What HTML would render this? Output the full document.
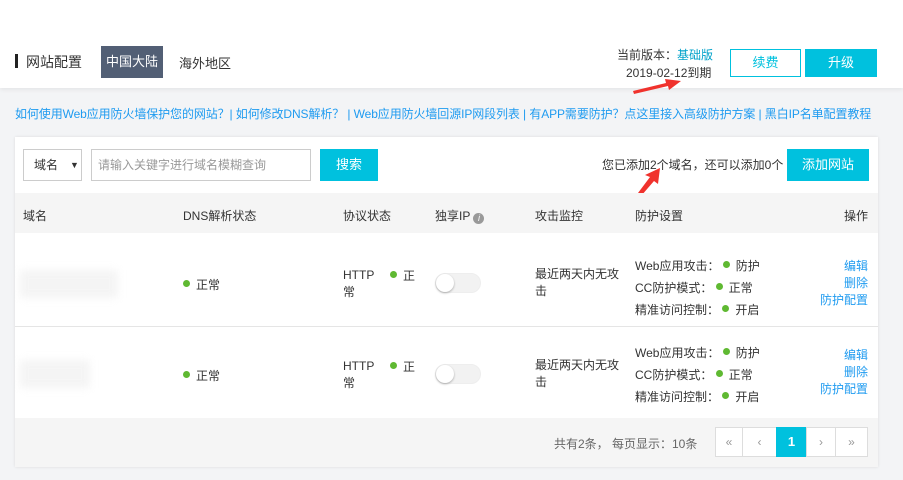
<!DOCTYPE html>
<html><head><meta charset="utf-8"><style>
*{margin:0;padding:0;box-sizing:border-box}
body{width:903px;height:480px;overflow:hidden;background:#f3f4f6;font-family:"Liberation Sans","Noto Sans CJK SC",sans-serif;font-size:12px;color:#333;position:relative}
.a{position:absolute;white-space:nowrap}
.hdr{position:absolute;left:0;top:0;width:903px;height:88px;background:#fff;box-shadow:0 2px 4px rgba(0,0,0,.06)}
.btn{position:absolute;text-align:center;font-size:13px}
.card{position:absolute;left:15px;top:137px;width:863px;height:330px;background:#fff;box-shadow:0 0 3px rgba(0,0,0,.1)}
.dot{display:inline-block;width:7px;height:7px;border-radius:50%;background:#5fb932;margin-right:6px;vertical-align:2px}
.lk{color:#1f9bf0}
.sw{position:absolute;width:46px;height:20px;border-radius:10px;background:#f2f2f2;border:1px solid #eee}
.sw:after{content:"";position:absolute;left:0;top:0;width:18px;height:18px;border-radius:50%;background:#fff;box-shadow:0 1px 2px rgba(0,0,0,.3)}
.pg{position:absolute;top:427px;height:30px;border:1px solid #ddd;background:#fff;text-align:center;line-height:28px;color:#999;font-size:12px}
</style></head><body>
<div class="hdr"></div>
<div class="a" style="left:15px;top:54px;width:3px;height:14px;background:#222"></div>
<div class="a" style="left:26px;top:52px;font-size:14px;color:#333">网站配置</div>
<div class="a" style="left:101px;top:46px;width:62px;height:32px;background:#525f75;color:#fff;font-size:13px;line-height:32px;text-align:center">中国大陆</div>
<div class="a" style="left:179px;top:53px;font-size:13px;color:#333">海外地区</div>
<div class="a" style="left:617px;top:46px;font-size:12px;color:#333">当前版本：<span class="lk" style="color:#00a2ca">基础版</span></div>
<div class="a" style="left:626px;top:64px;font-size:12px;color:#333">2019-02-12到期</div>
<div class="btn" style="left:730px;top:49px;width:71px;height:28px;border:1px solid #00c1de;color:#00c1de;line-height:26px">续费</div>
<div class="btn" style="left:805px;top:49px;width:72px;height:28px;background:#00c1de;color:#fff;line-height:28px">升级</div>
<svg class="a" style="left:630px;top:75px" width="60" height="25"><polygon points="3,16 36,8 35,4 51,6 39,15 38,11 4,19" fill="#f0322d"/></svg>
<div class="a lk" style="left:15px;top:105px;font-size:12px;letter-spacing:-0.1px">如何使用Web应用防火墙保护您的网站？| 如何修改DNS解析？ | Web应用防火墙回源IP网段列表 | 有APP需要防护？点这里接入高级防护方案 | 黑白IP名单配置教程</div>
<div class="card"></div>
<div class="a" style="left:23px;top:149px;width:59px;height:32px;border:1px solid #ccc;background:#fff;font-size:12px;line-height:30px;padding-left:10px">域名 <span style="position:absolute;left:46px;font-size:9px">▼</span></div>
<div class="a" style="left:91px;top:149px;width:220px;height:32px;border:1px solid #ccc;background:#fff;color:#999;font-size:12px;line-height:30px;padding-left:6px">请输入关键字进行域名模糊查询</div>
<div class="btn" style="left:320px;top:149px;width:58px;height:32px;background:#00c1de;color:#fff;line-height:32px">搜索</div>
<div class="a" style="left:602px;top:156px;font-size:12px;color:#333">您已添加2个域名，还可以添加0个</div>
<div class="btn" style="left:787px;top:149px;width:82px;height:32px;background:#00c1de;color:#fff;line-height:32px">添加网站</div>
<svg class="a" style="left:630px;top:165px" width="40" height="40"><polygon points="2,36 20,12 15,10 30,3 28,19 24,16 5,38" fill="#f0322d"/></svg>
<div class="a" style="left:15px;top:193px;width:863px;height:40px;background:#f5f5f5"></div>
<div class="a" style="left:23px;top:207px">域名</div>
<div class="a" style="left:183px;top:207px">DNS解析状态</div>
<div class="a" style="left:343px;top:207px">协议状态</div>
<div class="a" style="left:435px;top:207px">独享IP <span style="display:inline-block;width:11px;height:11px;border-radius:50%;background:#999;color:#fff;font-size:9px;line-height:11px;text-align:center;font-style:italic;vertical-align:-1px">i</span></div>
<div class="a" style="left:535px;top:207px">攻击监控</div>
<div class="a" style="left:635px;top:207px">防护设置</div>
<div class="a" style="left:844px;top:207px">操作</div>
<div class="a" style="left:15px;top:326px;width:863px;height:1px;background:#e5e5e5"></div>
<div class="a" style="left:15px;top:418px;width:863px;height:49px;background:#f5f5f5"></div>

<div class="a" style="left:20px;top:270px;width:98px;height:28px;background:#f0f0f0;filter:blur(4px);opacity:.7"></div>
<div class="a" style="left:183px;top:276px"><span class="dot"></span>正常</div>
<div class="a" style="left:343px;top:267px;line-height:17px">HTTP<br>常</div>
<div class="a" style="left:390px;top:267px"><span class="dot"></span>正</div>
<div class="sw" style="left:435px;top:273px"></div>
<div class="a" style="left:535px;top:266px;line-height:17px">最近两天内无攻<br>击</div>
<div class="a" style="left:635px;top:255px;line-height:22px">Web应用攻击： <span class="dot"></span>防护<br>CC防护模式： <span class="dot"></span>正常<br>精准访问控制： <span class="dot"></span>开启</div>
<div class="a lk" style="right:35px;top:258px;line-height:17px;text-align:right">编辑<br>删除<br>防护配置</div>

<div class="a" style="left:20px;top:360px;width:70px;height:28px;background:#f0f0f0;filter:blur(4px);opacity:.7"></div>
<div class="a" style="left:183px;top:367px"><span class="dot"></span>正常</div>
<div class="a" style="left:343px;top:358px;line-height:17px">HTTP<br>常</div>
<div class="a" style="left:390px;top:358px"><span class="dot"></span>正</div>
<div class="sw" style="left:435px;top:364px"></div>
<div class="a" style="left:535px;top:357px;line-height:17px">最近两天内无攻<br>击</div>
<div class="a" style="left:635px;top:342px;line-height:22px">Web应用攻击： <span class="dot"></span>防护<br>CC防护模式： <span class="dot"></span>正常<br>精准访问控制： <span class="dot"></span>开启</div>
<div class="a lk" style="right:35px;top:347px;line-height:17px;text-align:right">编辑<br>删除<br>防护配置</div>

<div class="a" style="left:554px;top:435px;color:#666">共有2条， 每页显示：10条</div>
<div class="pg" style="left:715px;width:28px">«</div>
<div class="pg" style="left:742px;width:35px">‹</div>
<div class="pg" style="left:776px;width:31px;background:#00c1de;border-color:#00c1de;color:#fff;font-weight:bold;font-size:13px">1</div>
<div class="pg" style="left:806px;width:30px">›</div>
<div class="pg" style="left:835px;width:33px">»</div>
</body></html>
